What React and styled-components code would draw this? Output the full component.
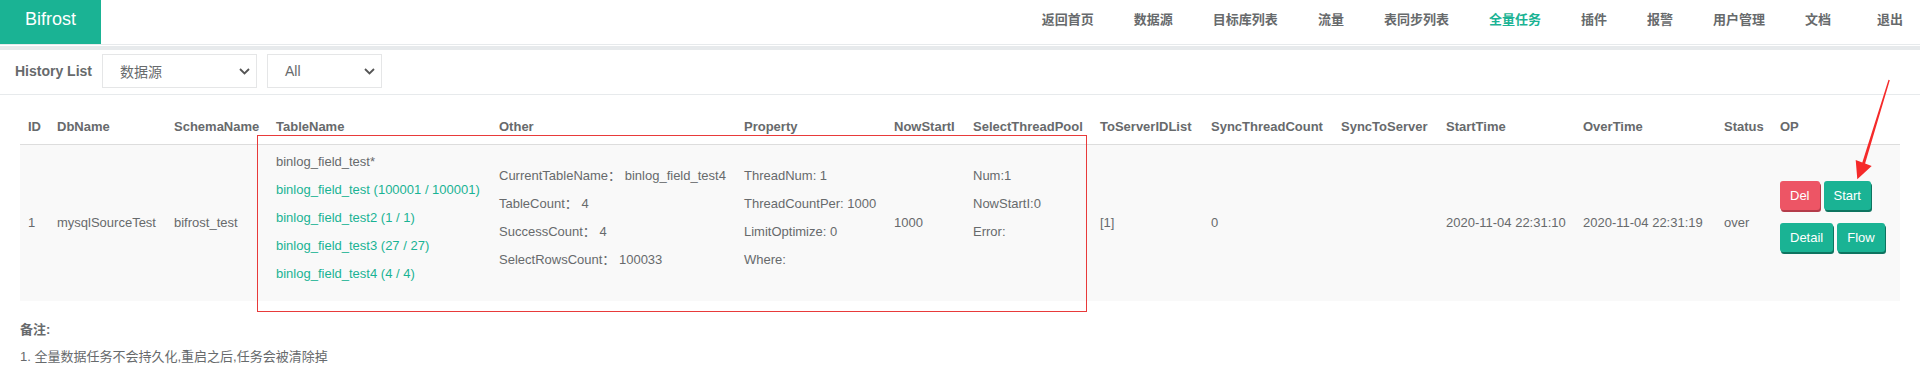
import React from "react";
import styled, { createGlobalStyle, css } from "styled-components";

const GREEN = "#1ab394";
const TEXT = "#676a6c";

const GlobalStyle = createGlobalStyle`
	body {
		margin: 0;
		background: #fff;
		color: ${TEXT};
		font-family: "Liberation Sans", Arial, "Noto Sans CJK SC", sans-serif;
		font-size: 13px;
	}
	* {
		box-sizing: border-box;
	}
`;

const Page = styled.div`
	position: relative;
	width: 1920px;
	min-height: 386px;
`;

const TopBar = styled.header`
	display: flex;
	height: 45px;
	border-bottom: 1px solid #e7eaec;
`;

const Brand = styled.div`
	width: 101px;
	height: 44px;
	padding-left: 25px;
	background: ${GREEN};
	color: #fff;
	font-size: 18px;
	line-height: 39px;
`;

const NavList = styled.nav`
	display: flex;
	align-items: center;
	gap: 40px;
	margin-left: auto;
	padding: 0 17px 6px 0;
`;

const NavItem = styled.a`
	font-family: "Noto Sans CJK SC", sans-serif;
	font-size: 13px;
	font-weight: 600;
	line-height: 18px;
	color: ${p => (p.$active ? GREEN : TEXT)};
	text-decoration: none;
	white-space: nowrap;

	${p => p.$last && css`
		margin-left: 6px;
	`}
`;

const Band = styled.div`
	height: 4px;
	margin-top: 1px;
	background: #e7eaec;
`;

const FilterBar = styled.div`
	display: flex;
	align-items: center;
	height: 45px;
	padding: 4px 15px 6px;
	border-bottom: 1px solid #e7eaec;
`;

const FilterTitle = styled.span`
	font-size: 14px;
	font-weight: bold;
	margin-right: 10px;
`;

const SelectBox = styled.div`
	display: flex;
	align-items: center;
	justify-content: space-between;
	width: ${p => p.$width}px;
	height: 34px;
	margin-right: 10px;
	padding: 0 6px 0 17px;
	border: 1px solid #e5e6e7;
	font-family: "Liberation Sans", "Noto Sans CJK SC", sans-serif;
	font-size: 14px;
	color: ${TEXT};
`;

const Content = styled.div`
	padding: 14px 20px 0;
`;

const Table = styled.table`
	width: 100%;
	border-collapse: collapse;
	table-layout: fixed;
`;

const Th = styled.th`
	padding: 8px;
	text-align: left;
	font-weight: bold;
	line-height: 19px;
	white-space: nowrap;
	border-bottom: 1px solid #dddddd;
`;

const Row = styled.tr`
	background: #f9f9f9;
`;

const Td = styled.td`
	padding: 8px;
	vertical-align: middle;
	line-height: 18px;
	white-space: nowrap;
`;

const Line = styled.div`
	min-height: 18px;
	margin-bottom: 10px;
	line-height: 18px;
	color: ${p => (p.$green ? GREEN : TEXT)};
`;

const OpRow = styled.div`
	display: flex;
	gap: 4px;
	margin-bottom: 13px;
`;

const Button = styled.button`
	height: 29px;
	padding: 0 10px;
	border: none;
	border-radius: 3px;
	font-family: "Liberation Sans", Arial, sans-serif;
	font-size: 13px;
	line-height: 29px;
	color: #fff;
	background: ${p => (p.$danger ? "#ed5565" : GREEN)};
	box-shadow: 1px 2px 0 ${p => (p.$danger ? "#b43c4a" : "#0e7460")};
`;

const Notes = styled.div`
	padding: 20px 20px 0;
	line-height: 18px;
`;

const NoteTitle = styled.div`
	font-weight: bold;
	margin-bottom: 9px;
`;

const HighlightBox = styled.div`
	position: absolute;
	left: 257px;
	top: 135px;
	width: 830px;
	height: 177px;
	border: 1px solid #e83a3a;
	pointer-events: none;
`;

const Arrow = styled.svg`
	position: absolute;
	left: 1850px;
	top: 76px;
	pointer-events: none;
`;

const Chevron = () => (
	<svg width="11" height="7" viewBox="0 0 11 7">
		<path d="M1 1l4.5 4.5L10 1" fill="none" stroke="#555" strokeWidth="1.8" />
	</svg>
);

const navItems = ["返回首页", "数据源", "目标库列表", "流量", "表同步列表", "全量任务", "插件", "报警", "用户管理", "文档", "退出"];

const columns = [
	["ID", 29], ["DbName", 117], ["SchemaName", 102], ["TableName", 223], ["Other", 245],
	["Property", 150], ["NowStartI", 79], ["SelectThreadPool", 127], ["ToServerIDList", 111],
	["SyncThreadCount", 130], ["SyncToServer", 105], ["StartTime", 137], ["OverTime", 141],
	["Status", 56], ["OP", 128],
];

export default function App() {
	return (
		<Page>
			<GlobalStyle />
			<TopBar>
				<Brand>Bifrost</Brand>
				<NavList>
					{navItems.map((item, i) => (
						<NavItem
							key={item}
							$active={item === "全量任务"}
							$last={i === navItems.length - 1}
						>
							{item}
						</NavItem>
					))}
				</NavList>
			</TopBar>
			<Band />

			<FilterBar>
				<FilterTitle>History List</FilterTitle>
				<SelectBox $width={155}>
					<span>数据源</span>
					<Chevron />
				</SelectBox>
				<SelectBox $width={115}>
					<span>All</span>
					<Chevron />
				</SelectBox>
			</FilterBar>

			<Content>
				<Table>
					<colgroup>
						{columns.map(([name, w]) => <col key={name} style={{ width: w }} />)}
					</colgroup>
					<thead>
						<tr>
							{columns.map(([name]) => <Th key={name}>{name}</Th>)}
						</tr>
					</thead>
					<tbody>
						<Row>
							<Td>1</Td>
							<Td>mysqlSourceTest</Td>
							<Td>bifrost_test</Td>
							<Td>
								<Line>binlog_field_test*</Line>
								<Line $green>binlog_field_test (100001 / 100001)</Line>
								<Line $green>binlog_field_test2 (1 / 1)</Line>
								<Line $green>binlog_field_test3 (27 / 27)</Line>
								<Line $green>binlog_field_test4 (4 / 4)</Line>
							</Td>
							<Td>
								<Line>CurrentTableName： binlog_field_test4</Line>
								<Line>TableCount： 4</Line>
								<Line>SuccessCount： 4</Line>
								<Line>SelectRowsCount： 100033</Line>
							</Td>
							<Td>
								<Line>ThreadNum: 1</Line>
								<Line>ThreadCountPer: 1000</Line>
								<Line>LimitOptimize: 0</Line>
								<Line>Where:</Line>
							</Td>
							<Td>1000</Td>
							<Td>
								<Line>Num:1</Line>
								<Line>NowStartI:0</Line>
								<Line>Error:</Line>
								<Line />
							</Td>
							<Td>[1]</Td>
							<Td>0</Td>
							<Td></Td>
							<Td>2020-11-04 22:31:10</Td>
							<Td>2020-11-04 22:31:19</Td>
							<Td>over</Td>
							<Td>
								<OpRow>
									<Button $danger>Del</Button>
									<Button>Start</Button>
								</OpRow>
								<OpRow>
									<Button>Detail</Button>
									<Button>Flow</Button>
								</OpRow>
							</Td>
						</Row>
					</tbody>
				</Table>
			</Content>

			<Notes>
				<NoteTitle>备注:</NoteTitle>
				<div>1. 全量数据任务不会持久化,重启之后,任务会被清除掉</div>
			</Notes>

			<HighlightBox />
			<Arrow width="45" height="108" viewBox="0 0 45 108">
				<polygon
					points="38.5,3.8 12.3,86.5 5.7,84 7.3,103.3 21.7,90 15.1,87.5 39.8,4.2"
					fill="#f52a2a"
				/>
			</Arrow>
		</Page>
	);
}
